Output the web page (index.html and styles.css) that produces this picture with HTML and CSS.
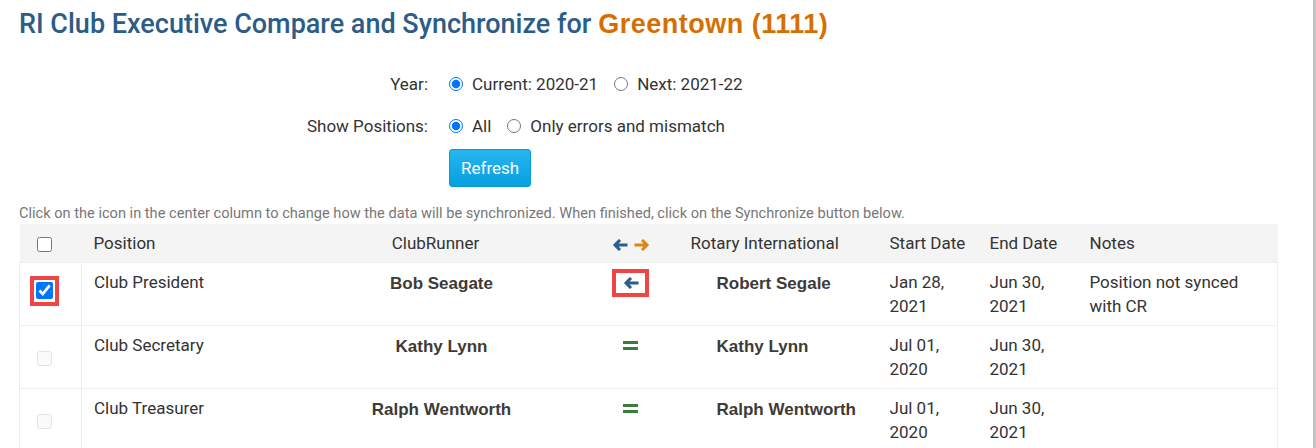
FILE: index.html
```html
<!DOCTYPE html>
<html>
<head>
<meta charset="utf-8">
<link rel="stylesheet" href="styles.css">
</head>
<body>
<div class="page">
  <h1 class="title">RI Club Executive Compare and Synchronize for <span class="club">Greentown (1111)</span></h1>

  <div class="form">
    <div class="lbl">Year:</div>
    <div class="ctl">
      <label class="opt"><input type="radio" name="year" checked> Current: 2020-21</label>
      <label class="opt"><input type="radio" name="year"> Next: 2021-22</label>
    </div>
    <div class="lbl">Show Positions:</div>
    <div class="ctl">
      <label class="opt"><input type="radio" name="show" checked> All</label>
      <label class="opt"><input type="radio" name="show"> Only errors and mismatch</label>
    </div>
    <div></div>
    <div class="ctl"><button class="btn">Refresh</button></div>
  </div>

  <p class="hint">Click on the icon in the center column to change how the data will be synchronized. When finished, click on the Synchronize button below.</p>

  <table class="grid">
    <colgroup>
      <col class="c-cb"><col class="c-pos"><col class="c-cr"><col class="c-ar"><col class="c-ri"><col class="c-d"><col class="c-d"><col class="c-notes">
    </colgroup>
    <thead>
      <tr>
        <th class="cb"><input type="checkbox" class="chk"></th>
        <th>Position</th>
        <th class="th-cr">ClubRunner</th>
        <th class="ar">
          <span class="arrows">
            <svg class="arrow" viewBox="0 0 16 12" width="16" height="12"><path d="M15.5 6H3M8 1L3 6l5 5" fill="none" stroke="#2a5e8b" stroke-width="3"/></svg>
            <svg class="arrow" viewBox="0 0 16 12" width="16" height="12"><path d="M0.5 6H13M8 1L13 6l-5 5" fill="none" stroke="#e0860e" stroke-width="3"/></svg>
          </span>
        </th>
        <th>Rotary International</th>
        <th>Start Date</th>
        <th>End Date</th>
        <th>Notes</th>
      </tr>
    </thead>
    <tbody>
      <tr>
        <td class="cb"><span class="mark"><input type="checkbox" class="chk" checked></span></td>
        <td>Club President</td>
        <td class="name cr">Bob Seagate</td>
        <td class="ar"><span class="mark-ar"><svg class="arrow" viewBox="0 0 16 12" width="16" height="12"><path d="M15.5 6H3M8 1L3 6l5 5" fill="none" stroke="#2a5e8b" stroke-width="3"/></svg></span></td>
        <td class="name ri">Robert Segale</td>
        <td>Jan 28, 2021</td>
        <td>Jun 30, 2021</td>
        <td>Position not synced with CR</td>
      </tr>
      <tr>
        <td class="cb"><input type="checkbox" class="chk dis" disabled></td>
        <td>Club Secretary</td>
        <td class="name cr">Kathy Lynn</td>
        <td class="ar"><span class="eq"></span></td>
        <td class="name ri">Kathy Lynn</td>
        <td>Jul 01, 2020</td>
        <td>Jun 30, 2021</td>
        <td></td>
      </tr>
      <tr>
        <td class="cb"><input type="checkbox" class="chk dis" disabled></td>
        <td>Club Treasurer</td>
        <td class="name cr">Ralph Wentworth</td>
        <td class="ar"><span class="eq"></span></td>
        <td class="name ri">Ralph Wentworth</td>
        <td>Jul 01, 2020</td>
        <td>Jun 30, 2021</td>
        <td></td>
      </tr>
    </tbody>
  </table>
</div>
</body>
</html>
```
FILE: styles.css
```css
html {
  border-right: 3px solid #c3c3c3;
  background: #fff;
}
body {
  margin: 0;
  font-family: Roboto, "Liberation Sans", sans-serif;
  font-size: 17px;
  color: #333;
}
.page {
  padding: 0 0 0 19px;
}
.title {
  margin: 0;
  padding-top: 9px;
  font-size: 27px;
  line-height: 30px;
  font-weight: 500;
  color: #2b5d88;
}
.club {
  font-family: "Liberation Sans", Arial, sans-serif;
  font-weight: bold;
  font-size: 27px;
  letter-spacing: 0.5px;
  color: #d56f02;
}
.form {
  display: grid;
  grid-template-columns: 409px auto;
  column-gap: 21px;
  row-gap: 18px;
  margin-top: 33px;
  line-height: 24px;
}
.lbl {
  text-align: right;
}
.ctl {
  display: flex;
  align-items: center;
  gap: 16px;
}
.opt {
  display: flex;
  align-items: center;
  gap: 9px;
}
.opt input {
  margin: 0;
  width: 14px;
  height: 14px;
}
.btn {
  margin-top: -7px;
  height: 38px;
  padding: 0 11px;
  font-family: Roboto, "Liberation Sans", sans-serif;
  font-size: 17px;
  color: #fff;
  background: linear-gradient(#25b6ee, #06a0e1);
  border: 1px solid #0a9ad6;
  border-radius: 3px;
}
.hint {
  margin: 16px 0 0;
  font-size: 14.6px;
  line-height: 21px;
  color: #777;
}
.grid {
  border-collapse: collapse;
  table-layout: fixed;
  width: 1258px;
  line-height: 24px;
}
.c-cb { width: 62px; }
.c-pos { width: 219px; }
.c-cr { width: 282px; }
.c-ar { width: 96px; }
.c-ri { width: 199px; }
.c-d { width: 100px; }
.c-notes { width: 200px; }
th {
  background: #f4f4f4;
  font-weight: normal;
  text-align: left;
  padding: 7px 8px 7px 12px;
}
td {
  vertical-align: top;
  padding: 7px 8px 7px 12px;
  border-top: 1px solid #eee;
}
tbody tr td:first-child { border-left: 1px solid #eee; }
tbody tr td:last-child { border-right: 1px solid #eee; }
th.cb, td.cb {
  text-align: center;
  padding: 0 12px 0 0;
  vertical-align: middle;
}
td.cb { border-right: 1px solid #eee; }
.th-cr {
  text-align: center;
  padding-left: 0;
  padding-right: 12px;
}
.ar {
  text-align: center;
  padding-left: 0;
  padding-right: 0;
}
.arrows {
  display: inline-flex;
  gap: 6px;
  vertical-align: middle;
}
.arrow { display: block; }
.name {
  font-family: "Liberation Sans", Arial, sans-serif;
  font-weight: bold;
  font-size: 17px;
  color: #3e3a36;
  padding-top: 9px;
}
.cr { text-align: center; padding-left: 10px; padding-right: 10px; }
.ri { padding-left: 38px; }
.chk {
  margin: 0;
  width: 15px;
  height: 15px;
  vertical-align: middle;
}
.mark .chk { width: 17px; height: 17px; display: block; }
.chk.dis {
  appearance: none;
  -webkit-appearance: none;
  width: 15px;
  height: 15px;
  border: 1px solid #e4e4e4;
  border-radius: 3px;
  background: #fafafa;
}
.mark {
  display: inline-block;
  border: 4px solid #f04545;
  padding: 2px 2px 3px;
  background: #fff;
}
.mark-ar {
  display: inline-flex;
  justify-content: center;
  align-items: center;
  width: 29px;
  height: 20px;
  border: 4px solid #f04545;
  margin-top: -1px;
}
.eq {
  display: inline-block;
  width: 15px;
  height: 9px;
  margin-top: 8px;
  vertical-align: top;
  border-top: 3px solid #3c7a3e;
  border-bottom: 3px solid #3c7a3e;
  box-sizing: border-box;
}
```
